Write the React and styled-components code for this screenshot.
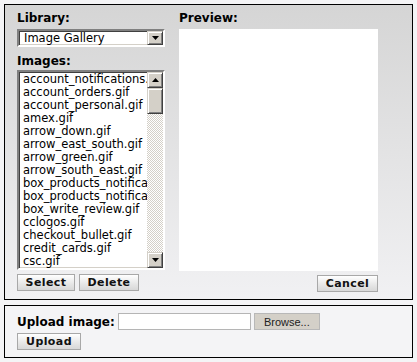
import React from "react";
import styled, { createGlobalStyle } from "styled-components";

const GlobalStyle = createGlobalStyle`
  html, body {
    margin: 0;
    padding: 0;
    background: #f4f4f6;
  }
  body {
    font-family: "DejaVu Sans", Verdana, sans-serif;
    font-size: 11px;
    color: #000;
  }
`;

// styled //

const Wrapper = styled.div`
  padding: 4px;
  width: 409px;
  display: flex;
  flex-direction: column;
  gap: 5px;
`;

const Panel = styled.div`
  border: 1px solid #000;
  background: ${(p) =>
    p.$gradient ? "linear-gradient(#d5d5d5, #f1f1f3)" : "#f4f4f6"};
  padding: ${(p) => p.$pad};
`;

const Columns = styled.div`
  display: flex;
  gap: 14px;
`;

const LeftCol = styled.div`
  width: 148px;
  display: flex;
  flex-direction: column;
`;

const RightCol = styled.div`
  width: 199px;
  display: flex;
  flex-direction: column;
`;

const Label = styled.div`
  font-weight: bold;
  font-size: 12px;
  line-height: 16px;
  height: ${(p) => p.$h || "16px"};
  white-space: nowrap;
`;

const Inset = styled.div`
  box-sizing: border-box;
  border-style: solid;
  border-width: 2px;
  border-color: #808080 #ffffff #ffffff #808080;
  box-shadow: inset 1px 1px 0 #404040, inset -1px -1px 0 #d4d0c8;
  background: #fff;
`;

const SelectBox = styled(Inset)`
  height: 18px;
  display: flex;
  align-items: center;
  padding-left: 5px;
  margin-bottom: 6px;
`;

const SelectText = styled.div`
  flex: 1;
  line-height: 14px;
  font-size: 11.5px;
`;

const ArrowButton = styled.div`
  width: 16px;
  height: ${(p) => p.$h || "14px"};
  box-sizing: border-box;
  background: #d4d0c8;
  border-style: solid;
  border-width: 1px;
  border-color: #d4d0c8 #404040 #404040 #d4d0c8;
  box-shadow: inset 1px 1px 0 #ffffff, inset -1px -1px 0 #808080;
  display: flex;
  align-items: center;
  justify-content: center;
  flex-shrink: 0;
`;

const ListBox = styled(Inset)`
  height: 200px;
  display: flex;
  overflow: hidden;
  margin-top: 1px;
`;

const Items = styled.div`
  flex: 1;
  overflow: hidden;
  padding: 1px 0 0 4px;
`;

const Item = styled.div`
  line-height: 13px;
  white-space: nowrap;
  font-size: 11.5px;
`;

const ScrollBar = styled.div`
  width: 16px;
  display: flex;
  flex-direction: column;
`;

const Thumb = styled(ArrowButton)`
  height: 26px;
`;

const Track = styled.div`
  flex: 1;
  background-color: #fff;
  background-image: conic-gradient(
    #d4d0c8 25%,
    #fff 0 50%,
    #d4d0c8 0 75%,
    #fff 0
  );
  background-size: 2px 2px;
`;

const Preview = styled.div`
  background: #fff;
  height: 242px;
  margin-top: 2px;
`;

const ButtonRow = styled.div`
  display: flex;
  gap: 4px;
  justify-content: ${(p) => (p.$end ? "flex-end" : "flex-start")};
  margin-top: ${(p) => p.$mt || "4px"};
`;

const Button = styled.button`
  font-family: "DejaVu Sans", Verdana, sans-serif;
  font-weight: bold;
  font-size: 11px;
  letter-spacing: 0.4px;
  color: #111;
  height: 17px;
  width: ${(p) => p.$w};
  padding: 0;
  border: 1px solid #a8a8a8;
  background: linear-gradient(#ffffff, #e6e6e6 60%, #d8d8d8);
  white-space: nowrap;
  cursor: pointer;
`;

const UploadRow = styled.div`
  display: flex;
  align-items: center;
  gap: 3px;
`;

const FileInput = styled.div`
  width: 133px;
  height: 17px;
  box-sizing: border-box;
  border: 1px solid #b5b5b5;
  background: #fff;
`;

const BrowseButton = styled.div`
  width: 66px;
  height: 17px;
  box-sizing: border-box;
  border: 1px solid #b8b8b8;
  background: #d4d0c8;
  font-family: "Liberation Sans", Arial, sans-serif;
  font-size: 11px;
  color: #222;
  display: flex;
  align-items: center;
  justify-content: center;
`;

const Caret = ({ up }) => (
  <svg width="7" height="4" viewBox="0 0 7 4">
    <path d={up ? "M3.5 0 L7 4 L0 4 Z" : "M0 0 L7 0 L3.5 4 Z"} fill="#000" />
  </svg>
);

const images = [
  "account_notifications.gif",
  "account_orders.gif",
  "account_personal.gif",
  "amex.gif",
  "arrow_down.gif",
  "arrow_east_south.gif",
  "arrow_green.gif",
  "arrow_south_east.gif",
  "box_products_notifications.gif",
  "box_products_notifications_remove.gif",
  "box_write_review.gif",
  "cclogos.gif",
  "checkout_bullet.gif",
  "credit_cards.gif",
  "csc.gif",
];

function App() {
  return (
    <Wrapper>
      <GlobalStyle />
      <Panel $gradient $pad="5px 34px 7px 12px">
        <Columns>
          <LeftCol>
            <Label $h="19px">Library:</Label>
            <SelectBox>
              <SelectText>Image Gallery</SelectText>
              <ArrowButton>
                <Caret />
              </ArrowButton>
            </SelectBox>
            <Label>Images:</Label>
            <ListBox>
              <Items>
                {images.map((name) => (
                  <Item key={name}>{name}</Item>
                ))}
              </Items>
              <ScrollBar>
                <ArrowButton $h="16px">
                  <Caret up />
                </ArrowButton>
                <Thumb />
                <Track />
                <ArrowButton $h="16px">
                  <Caret />
                </ArrowButton>
              </ScrollBar>
            </ListBox>
            <ButtonRow>
              <Button $w="58px">Select</Button>
              <Button $w="60px">Delete</Button>
            </ButtonRow>
          </LeftCol>
          <RightCol>
            <Label $h="17px">Preview:</Label>
            <Preview />
            <ButtonRow $end>
              <Button $w="61px">Cancel</Button>
            </ButtonRow>
          </RightCol>
        </Columns>
      </Panel>
      <Panel $pad="7px 12px 7px 12px">
        <UploadRow>
          <Label>Upload image:</Label>
          <FileInput />
          <BrowseButton>Browse...</BrowseButton>
        </UploadRow>
        <ButtonRow $mt="3px">
          <Button $w="64px">Upload</Button>
        </ButtonRow>
      </Panel>
    </Wrapper>
  );
}

export default App;
